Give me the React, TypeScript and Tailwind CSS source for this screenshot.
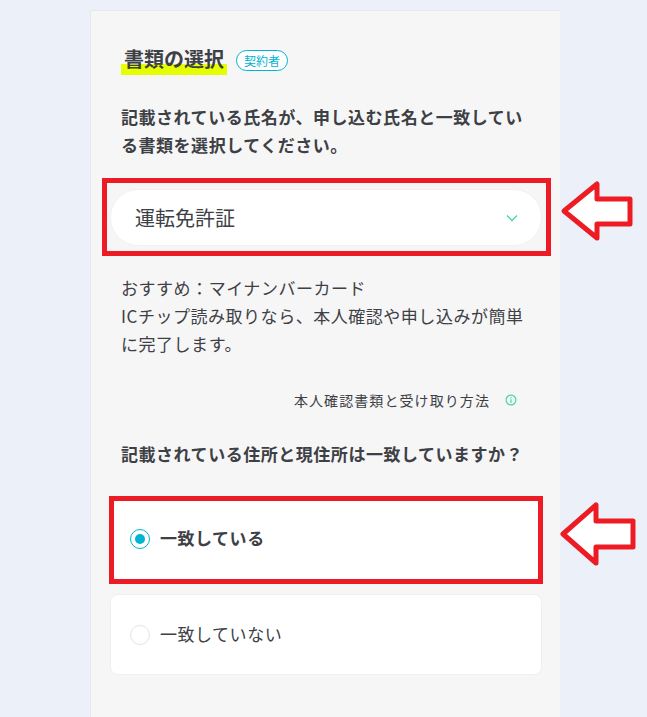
const cjk = "font-['Noto_Sans_CJK_JP','Noto_Sans',sans-serif]";

function Arrow({ className, points, w }: { className: string; points: string; w: number }) {
  return (
    <svg className={className} width={w} height="90" viewBox={`0 0 ${w} 90`} fill="#fff" stroke="#ed1c24" strokeWidth="5" strokeLinejoin="round">
      <polygon points={points} />
    </svg>
  );
}

export default function App() {
  return (
    <div className={`relative h-[717px] w-[647px] overflow-hidden bg-[#ecf0f9] text-[#3d4045] ${cjk}`}>
      <div className="ml-[90px] mt-[10px] h-[720px] w-[470px] border border-[#e6e8ec] border-r-0 bg-[#f6f6f6] pl-[30px] pr-[18px] pt-[32px]">
        <div className="flex items-center">
          <h2 className="bg-[linear-gradient(transparent_66%,#e6ff00_66%)] px-[3px] text-[20px] font-bold leading-[32px]">書類の選択</h2>
          <span className="ml-[9px] mt-[3px] flex h-[21px] w-[52px] items-center justify-center rounded-full border border-[#00b4d2] bg-white text-[12px] text-[#00b4d2]">契約者</span>
        </div>
        <p className="mt-[28px] w-[405px] text-[17px] font-bold leading-[28px] tracking-[0.53px]">記載されている氏名が、申し込む氏名と一致している書類を選択してください。</p>
        <div className="-ml-[11px] mt-[30px] flex h-[57px] w-[432px] items-center justify-between rounded-[28px] border border-[#f1f1f1] bg-white pl-[24px] pr-[23px]">
          <span className="text-[20px]">運転免許証</span>
          <svg width="12" height="8" viewBox="0 0 12 8" fill="none" stroke="#43d6a6" strokeWidth="1.3" className="mt-[1px]"><path d="M1 1.5 L6 6.5 L11 1.5" /></svg>
        </div>
        <p className="mt-[28px] w-[405px] text-[17px] leading-[28px] tracking-[0.53px]">おすすめ：マイナンバーカード<br />ICチップ読み取りなら、本人確認や申し込みが簡単に完了します。</p>
        <div className="mt-[32px] flex h-[20px] w-[396px] items-center justify-end">
          <span className="text-[14px] tracking-[1.08px]">本人確認書類と受け取り方法</span>
          <svg className="ml-[15px]" width="12" height="12" viewBox="0 0 12 12" fill="none" stroke="#43d6a6"><circle cx="6" cy="6" r="4.9" strokeWidth="1.2" /><path d="M6 5.3V9M6 3V4.2" strokeWidth="1.1" /></svg>
        </div>
        <p className="mt-[30px] text-[17px] font-bold leading-[28px] tracking-[0.53px]">記載されている住所と現住所は一致していますか？</p>
        <div className="-ml-[11px] mt-[31px] flex w-[432px] flex-col gap-[15px]">
          <div className="flex h-[80px] items-center rounded-[8px] bg-white pl-[20px]">
            <span className="flex h-[20px] w-[20px] items-center justify-center rounded-full border border-[#00b4d2]"><span className="h-[10px] w-[10px] rounded-full bg-[#00b4d2]" /></span>
            <span className="mb-[2px] ml-[10px] text-[17px] font-bold tracking-[0.53px]">一致している</span>
          </div>
          <div className="flex h-[81px] items-center rounded-[8px] border border-[#f0f0f0] bg-white pl-[19px]">
            <span className="h-[20px] w-[20px] rounded-full border border-[#e4e4e4]" />
            <span className="mb-[1px] ml-[10px] text-[17px] tracking-[0.53px]">一致していない</span>
          </div>
        </div>
      </div>

      <div className="absolute left-[102px] top-[178px] h-[78px] w-[449px] border-[5px] border-[#ed1c24]" />
      <div className="absolute left-[109px] top-[496px] h-[88px] w-[434px] border-[5px] border-[#ed1c24]" />
      <Arrow className="absolute left-[555px] top-[166px]" w={85} points="9,45 42,18 42,33 75,33 75,58 42,58 42,72" />
      <Arrow className="absolute left-[555px] top-[489px]" w={90} points="8,45 41,16 41,32 78,32 78,58 41,58 41,74" />
    </div>
  );
}
